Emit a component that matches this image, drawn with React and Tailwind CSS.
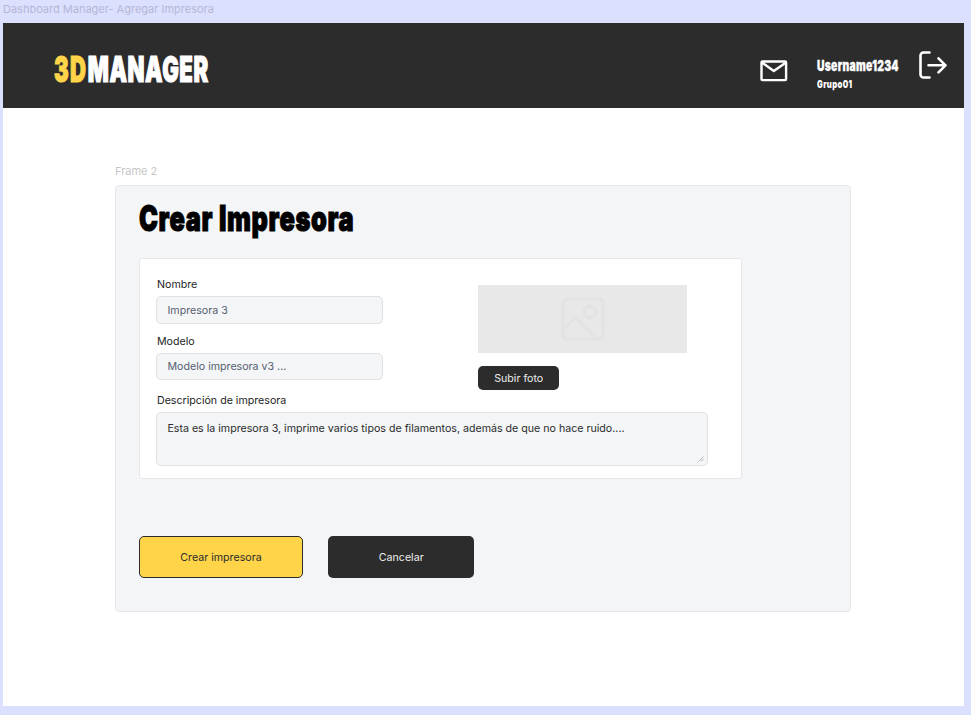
import React from "react";

// Heavy condensed lettering used by the brand, the user block and the heading.
function Condensed({ className = "", scale, children }) {
  return (
    <span
      className={`block origin-left whitespace-nowrap font-black ${scale} ${className}`}
    >
      {children}
    </span>
  );
}

function MailIcon() {
  return (
    <svg width="28" height="22" viewBox="0 0 28 22" fill="none" stroke="#fff" strokeWidth="2.4" strokeLinejoin="round">
      <rect x="1.5" y="1.5" width="24.6" height="18.6" rx="1" />
      <path d="M2 2.5 13.8 11 26 2.5" />
    </svg>
  );
}

function LogoutIcon() {
  return (
    <svg width="28" height="28" viewBox="0 0 28 28" fill="none" stroke="#fff" strokeWidth="2.6" strokeLinecap="round" strokeLinejoin="round">
      <path d="M10.5 1.5H4.5a3 3 0 0 0-3 3v19a3 3 0 0 0 3 3h6" />
      <path d="M9.5 14.3h17M19.5 7.3l7 7-7 7" />
    </svg>
  );
}

function PhotoIcon() {
  return (
    <svg width="44" height="44" viewBox="0 0 44 44" fill="none" stroke="#e3e3e3" strokeWidth="3.4">
      <rect x="2" y="2" width="40" height="40" rx="4.5" />
      <circle cx="29" cy="15" r="5.8" />
      <path d="M2 32 14.5 20.5 35 41" />
    </svg>
  );
}

function Field({ label, value }) {
  return (
    <div className="w-[227.5px]">
      <div className="h-[19px] pl-px leading-[16px] text-[#1e1e1e]">{label}</div>
      <div className="flex h-[27.5px] items-center rounded-[5px] border border-[#dfe0e1] bg-[#f3f5f7] pl-[10.5px] pt-[1.5px] text-[#566070]">
        {value}
      </div>
    </div>
  );
}

export default function App() {
  return (
    <div className="h-[715px] w-[971px] overflow-hidden bg-[#dce0ff] pl-[2.6px] font-['Inter',sans-serif] text-[10.65px]">
      <div className="h-[23px] pl-[0.4px] text-[11px] leading-[18px] text-[#b4b7d4]">
        Dashboard Manager- Agregar Impresora
      </div>
      <div className="h-[683px] w-[961.4px] bg-white">
        <header className="flex h-[85px] bg-[#2c2c2c] pl-[51.4px] text-white">
          <div className="w-[706px] pt-[26px]">
            <Condensed scale="scale-x-[0.63]" className="text-[35px] leading-[40px] tracking-[0.9px]">
              <span className="mr-[1px] tracking-[2px] text-[#ffd449] [-webkit-text-stroke:1.2px_#ffd449]">3D</span>
              <span className="[-webkit-text-stroke:1.2px_#fff]">MANAGER</span>
            </Condensed>
          </div>
          <div className="w-[56.5px] pt-[37px]">
            <MailIcon />
          </div>
          <div className="w-[102.5px] pl-[0.6px] pt-[34px]">
            <Condensed scale="scale-x-[0.7]" className="text-[14.8px] leading-[18px] tracking-[0.4px] [-webkit-text-stroke:0.3px_#fff]">Username1234</Condensed>
            <Condensed scale="scale-x-[0.7]" className="pt-[2px] text-[11px] leading-[14px] tracking-[0.5px]">Grupo01</Condensed>
          </div>
          <div className="pt-[28px]">
            <LogoutIcon />
          </div>
        </header>
        <main className="pl-[112.4px] pt-[54px]">
          <div className="h-[23px] text-[11px] leading-[18px] text-[#c6c6c6]">Frame 2</div>
          <section className="h-[427px] w-[736px] rounded-[4px] border border-[#e6e7ec] bg-[#f3f5f7] pl-[23px]">
            <h1 className="h-[72px] w-[300px] pl-[0.5px] pt-[11px] text-black">
              <Condensed scale="scale-x-[0.725]" className="text-[35px] leading-[42px] tracking-[0.9px] [-webkit-text-stroke:1.1px_#000]">Crear Impresora</Condensed>
            </h1>
            <div className="h-[221px] w-[603px] rounded-[3px] border border-[#e6e7ea] bg-white pl-4 pt-[18px]">
              <div className="flex h-[116px]">
                <div className="flex w-[322px] flex-col gap-[10.2px]">
                  <Field label="Nombre" value="Impresora 3" />
                  <Field label="Modelo" value="Modelo impresora v3 ..." />
                </div>
                <div className="pt-2">
                  <div className="flex h-[68px] w-[209px] items-center justify-center bg-[#e8e8e8] pl-[1.5px]">
                    <PhotoIcon />
                  </div>
                  <button className="mt-[12.5px] flex h-[24.5px] w-[81.5px] items-center justify-center rounded-[5px] bg-[#2c2c2c] pt-[1.5px] text-[#ececec]">
                    Subir foto
                  </button>
                </div>
              </div>
              <div className="h-[19px] pl-px leading-[16px] text-[#1e1e1e]">Descripción de impresora</div>
              <div className="flex h-[54px] w-[552px] justify-between rounded-[5px] border border-[#dfe0e1] bg-[#f3f5f7] pl-[10.4px] pt-[8px] leading-[16px] text-[#2c2c2c]">
                <span>Esta es la impresora 3, imprime varios tipos de filamentos, además de que no hace ruido....</span>
                <svg className="mb-[3px] mr-[3px] self-end" width="6" height="6" viewBox="0 0 6 6" stroke="#a5a5a5" strokeWidth="0.8">
                  <path d="M.5 5.5l5-5M3 5.5 5.5 3" />
                </svg>
              </div>
            </div>
            <div className="flex gap-[25px] pt-[57.4px]">
              <button className="h-[41.6px] w-[164px] rounded-[5px] border border-[#2c2c2c] bg-[#ffd449] pt-[2px] text-[#2c2c2c]">
                Crear impresora
              </button>
              <button className="h-[41.6px] w-[146.5px] rounded-[5px] bg-[#2c2c2c] pt-[2px] text-[#ececec]">Cancelar</button>
            </div>
          </section>
        </main>
      </div>
    </div>
  );
}
